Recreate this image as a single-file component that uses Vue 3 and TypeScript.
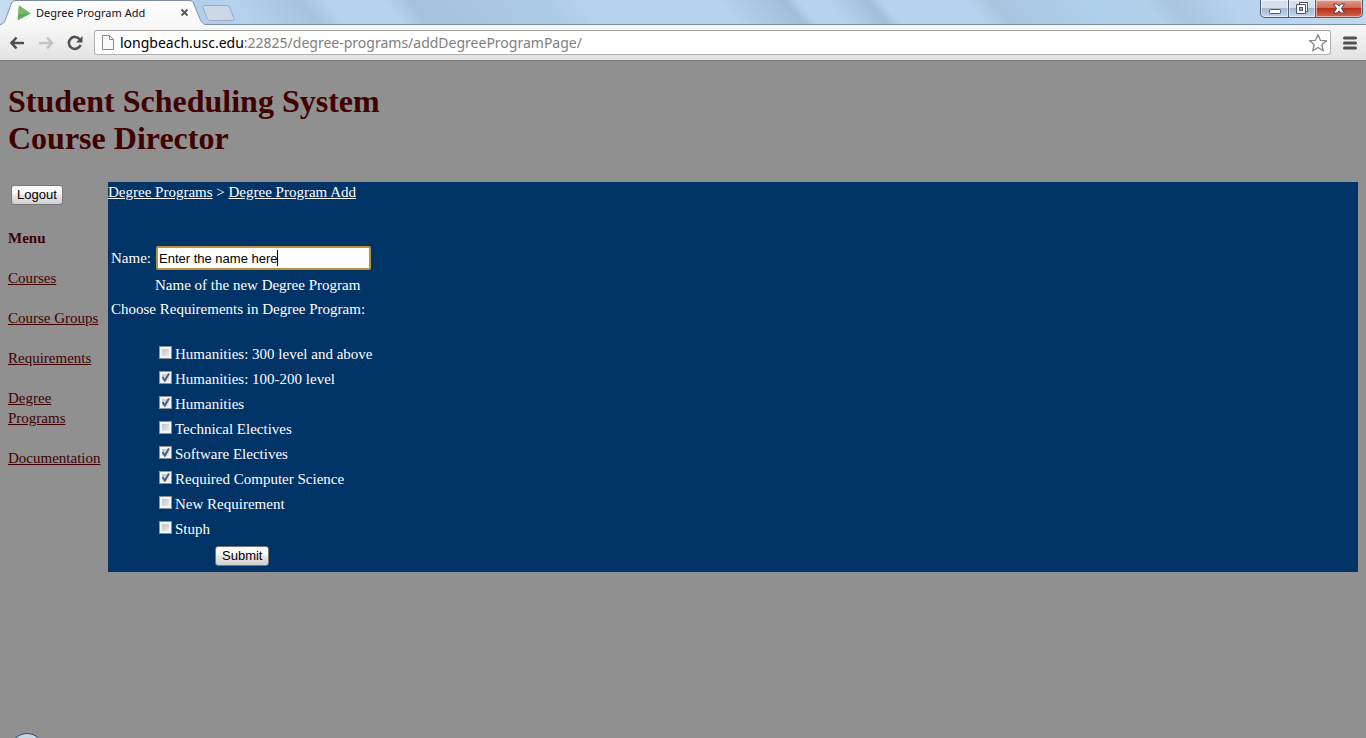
<script setup lang="ts">
import { ref } from 'vue'

interface Requirement {
  id: string
  label: string
  checked: boolean
}

const name = ref('Enter the name here')
const menu = ['Courses', 'Course Groups', 'Requirements', 'Degree Programs', 'Documentation']
const requirements = ref<Requirement[]>([
  { id: 'r1', label: 'Humanities: 300 level and above', checked: false },
  { id: 'r2', label: 'Humanities: 100-200 level', checked: true },
  { id: 'r3', label: 'Humanities', checked: true },
  { id: 'r4', label: 'Technical Electives', checked: false },
  { id: 'r5', label: 'Software Electives', checked: true },
  { id: 'r6', label: 'Required Computer Science', checked: true },
  { id: 'r7', label: 'New Requirement', checked: false },
  { id: 'r8', label: 'Stuph', checked: false },
])
</script>

<template>
  <div class="window">
    <header class="chrome">
      <div class="titlebar">
        <div class="tab">
          <svg class="tab-shape" width="240" height="25" viewBox="0 0 240 25" aria-hidden="true">
            <defs>
              <linearGradient id="tabFill" x1="0" y1="0" x2="0" y2="1">
                <stop offset="0" stop-color="#ffffff" />
                <stop offset="1" stop-color="#f8f8f8" />
              </linearGradient>
            </defs>
            <path d="M0 25V24.500C4 24 4.500 22 6 18L11 4.500C12 2 13 .5 16 .5H189C192 .5 193 2 194 4.500L200 19C202 23 203 24.500 207 24.500V25Z" fill="url(#tabFill)" />
            <path d="M0 24.500C4 24 4.500 22 6 18L11 4.500C12 2 13 .5 16 .5H189C192 .5 193 2 194 4.500L200 19C202 23 203 24.500 207 24.500" fill="none" stroke="#7d8fa6" />
            <path d="M205 5.500H226C228 5.500 229 6 230 8L233.500 17.500C234.500 19.500 234 20.500 232 20.500H211C209 20.500 208 20 207 18L203 8C202.500 6.500 203 5.500 205 5.500Z" fill="#ccd8e5" stroke="#98aabf" />
          </svg>
          <svg class="favicon" width="16" height="16" viewBox="0 0 16 16" aria-hidden="true">
            <path d="M3 .5L14.500 8.500L1.500 15.500Z" fill="#5cab5a" />
            <path d="M3 .5L14.500 8.500L2 9Z" fill="#79b865" />
          </svg>
          <span class="tab-title">Degree Program Add</span>
          <button class="tab-close" type="button" aria-label="Close tab">
            <svg width="9" height="9" viewBox="0 0 9 9"><path d="M1.500 1.500L7.500 7.500M7.500 1.500L1.500 7.500" stroke="#555" stroke-width="1.800" /></svg>
          </button>
        </div>
        <div class="window-buttons">
          <button type="button" class="min" aria-label="Minimize">
            <svg width="14" height="14" viewBox="0 0 14 14"><rect x="1.500" y="8.500" width="11" height="4" rx="1" fill="#fff" stroke="#4b566b" /></svg>
          </button>
          <button type="button" class="max" aria-label="Restore">
            <svg width="14" height="14" viewBox="0 0 14 14"><path d="M4.500 1.500H12.500V10.500H4.500Z" fill="#fff" stroke="#4b566b" /><path d="M1.500 3.500H10.500V12.500H1.500Z" fill="#fff" stroke="#4b566b" /><rect x="4.500" y="6.500" width="3" height="3" fill="#a9b9cd" stroke="#4b566b" /></svg>
          </button>
          <button type="button" class="close" aria-label="Close">
            <svg width="14" height="14" viewBox="0 0 14 14"><path d="M1.500 3H5L7 5.200L9 3H12.500L9.500 7.500L12.500 12H9L7 9.800L5 12H1.500L4.500 7.500Z" fill="#fff" stroke="#4c4450" /></svg>
          </button>
        </div>
      </div>
      <div class="toolbar">
        <button type="button" class="tool" aria-label="Back">
          <svg width="18" height="16" viewBox="0 0 18 16"><path d="M8.500 2.500L3.500 8L8.500 13.500M4 8H16" fill="none" stroke="#505050" stroke-width="2.600" /></svg>
        </button>
        <button type="button" class="tool" aria-label="Forward">
          <svg width="18" height="16" viewBox="0 0 18 16"><path d="M10 2.500L15 8L10 13.500M14.500 8H2" fill="none" stroke="#c4c4c4" stroke-width="2.600" /></svg>
        </button>
        <button type="button" class="tool" aria-label="Reload">
          <svg width="18" height="16" viewBox="0 0 18 16"><path d="M13.800 4.500A6 6 0 1 0 14.500 10" fill="none" stroke="#505050" stroke-width="2.600" /><path d="M16.500 1V7.500H10Z" fill="#505050" /></svg>
        </button>
        <div class="address">
          <svg width="12" height="15" viewBox="0 0 12 15" aria-hidden="true"><path d="M.5 .5H7.500L11.500 4.500V14.500H.5Z" fill="#fafafa" stroke="#888" /><path d="M7.500 .5V4.500H11.500" fill="none" stroke="#888" /></svg>
          <span class="url"><b>longbeach.usc.edu</b>:22825/degree-programs/addDegreeProgramPage/</span>
          <button type="button" class="star" aria-label="Bookmark">
            <svg width="20" height="20" viewBox="0 0 20 20"><path d="M10 1.500L12.400 7.300L18.500 7.700L13.800 11.600L15.300 17.800L10 14.500L4.700 17.800L6.200 11.600L1.500 7.700L7.600 7.300Z" fill="#fff" stroke="#888" stroke-width="1.300" stroke-linejoin="round" /></svg>
          </button>
        </div>
        <button type="button" class="tool menu-button" aria-label="Menu">
          <svg width="14" height="14" viewBox="0 0 14 14"><path d="M1.500 2H12.500M1.500 7H12.500M1.500 12H12.500" stroke="#505050" stroke-width="3" stroke-linecap="round" /></svg>
        </button>
      </div>
    </header>

    <main class="page">
      <h1>Student Scheduling System<br />Course Director</h1>
      <div class="columns">
        <nav class="side">
          <button type="button" class="push">Logout</button>
          <strong>Menu</strong>
          <a v-for="item in menu" :key="item" href="#">{{ item }}</a>
        </nav>
        <section class="panel">
          <div class="crumbs"><a href="#">Degree Programs</a> &gt; <a href="#">Degree Program Add</a></div>
          <form @submit.prevent>
            <div class="name-row">
              <label for="name">Name:</label>
              <div class="field">
                <input id="name" v-model="name" type="text" />
                <i class="caret"></i>
              </div>
            </div>
            <p class="hint">Name of the new Degree Program</p>
            <p class="choose">Choose Requirements in Degree Program:</p>
            <ul>
              <li v-for="r in requirements" :key="r.id">
                <input :id="r.id" v-model="r.checked" type="checkbox" />
                <svg v-if="r.checked" class="tick" width="13" height="13" viewBox="0 0 13 13" aria-hidden="true"><path d="M3.500 6L5.800 9.500L10 2.500" fill="none" stroke="#4a5f97" stroke-width="2" /></svg>
                <label :for="r.id">{{ r.label }}</label>
              </li>
            </ul>
            <button type="submit" class="push submit">Submit</button>
          </form>
        </section>
      </div>
    </main>
    <div class="orb"></div>
  </div>
</template>

<style>
body { margin: 0; background: #909090; }
</style>

<style scoped>
.window { position: relative; min-height: 100vh; overflow: hidden; background: #909090; font: 15px/20px "Liberation Serif", "Times New Roman", serif; color: #400000; }
button { font-family: "Liberation Sans", Arial, sans-serif; }
svg { display: block; }
.titlebar {
  display: flex; justify-content: space-between; height: 24px; border-bottom: 1px solid #7d8fa6;
  background: linear-gradient(50deg, #c9dcf0 0, #b0cfec 15%, #b5d1ed 18%, #a5c2df 23%, #b7d2ee 25%, #b7d2ee 29%, #a5c1de 31%, #abcae5 40%, #b7d2ee 44%, #b7d2ee 53%, #a3bedb 58%, #b7d2ee 59%, #b7d2ee 61%, #a3bedb 64%, #b7d2ee 65%, #b7d2ee 71%, #a8c5e0 73%, #afd0ec 80%, #b0cfe9 84%, #a9c5e0 86%, #b7d2ee 90%, #c4d9ef);
}
.tab { position: relative; display: flex; align-items: center; width: 240px; height: 25px; padding-left: 16px; box-sizing: border-box; }
.tab-shape { position: absolute; left: 0; top: 0; }
.favicon, .tab-title, .tab-close { position: relative; }
.tab-title { width: 144px; margin-left: 4px; font: 11px/24px "Noto Sans", sans-serif; color: #111; }
.tab-close { padding: 0; border: 0; background: none; }
.window-buttons { display: flex; align-items: flex-start; padding-right: 3px; }
.window-buttons button { display: flex; justify-content: center; align-items: center; height: 18px; padding: 0 0 2px; border: 1px solid #4e5c70; border-top: 0; box-sizing: border-box; box-shadow: inset 0 0 0 1px rgba(255,255,255,.5); background: linear-gradient(#d5e0ec 0 45%, #a4b8ce 50%, #c5d6e8); }
.window-buttons .min { width: 29px; border-radius: 0 0 0 5px; }
.window-buttons .max { width: 27px; border-left: 0; }
.window-buttons .close { width: 47px; border-left: 0; border-radius: 0 0 5px 0; background: linear-gradient(#e09d8f 0, #d26a55 45%, #b8301c 50%, #d5624a); }
.toolbar { display: flex; align-items: center; height: 35px; padding: 0 9px 0 8px; border-bottom: 1px solid #808080; background: linear-gradient(#f8f8f8, #e2e2e2); }
.tool { width: 18px; margin-right: 11px; padding: 0; border: 0; background: none; }
.tool.menu-button { width: 14px; margin: 0 0 0 12px; }
.address { display: flex; flex: 1; align-items: center; height: 25px; margin-left: -1px; padding: 0 2px 0 7px; border: 1px solid #b0b0b0; border-top-color: #a0a0a0; border-radius: 3px; box-sizing: border-box; background: #fff; }
.url { flex: 1; margin-left: 6px; font: 14px/22px "Noto Sans", sans-serif; color: #808080; white-space: nowrap; }
.url b { font-weight: 400; color: #000; }
.star { padding: 0; border: 0; background: none; }
.page { padding: 22px 8px 0; }
h1 { margin: 0 0 25px; font-size: 32px; line-height: 37px; }
.columns { display: grid; grid-template-columns: 100px 1fr; }
.side { display: flex; flex-direction: column; align-items: flex-start; gap: 20px; padding-top: 3px; }
.side a { color: #400000; }
.side .push { margin: 0 3px 3px; padding: 0 5px; }
.push { height: 20px; padding: 0 6px; border: 1px solid #777; border-radius: 3px; font-size: 13px; line-height: 16px; color: #000; background: linear-gradient(#fafafa 0 40%, #e8e8e8 50%, #cfcfcf); }
.panel { min-height: 390px; box-sizing: border-box; padding-bottom: 6px; background: #003366; color: #fff; }
.panel a { color: #fff; }
form { padding: 42px 0 0 3px; }
.name-row { display: flex; align-items: center; gap: 5px; height: 28px; }
.name-row label { width: 40px; }
.field { position: relative; }
.field input { display: block; width: 215px; height: 24px; padding: 1px; box-sizing: border-box; border: 2px solid #b8903f; border-radius: 2px; outline: 0; font: 13px/18px "Liberation Sans", Arial, sans-serif; color: #000; background: #fff; }
.caret { position: absolute; left: 121px; top: 4px; width: 1px; height: 16px; background: #000; }
p { margin: 0; }
.hint { margin: 3px 0 4px 44px; }
ul { margin: 22px 0 0; padding: 0 0 0 48px; list-style: none; }
li { position: relative; display: flex; align-items: center; gap: 3px; height: 25px; }
li input { appearance: none; width: 13px; height: 13px; margin: 0 0 3px; border: 1px solid #8e8f8f; box-shadow: inset 0 0 0 2px #f4f4f4; background: linear-gradient(135deg, #b8bcc4, #f3f3f3); }
.tick { position: absolute; left: 0; top: 5px; }
.submit { display: block; margin: 5px 0 0 104px; }
.orb { position: absolute; left: 10px; top: calc(100vh - 5px); width: 32px; height: 32px; border: 1px solid #234f78; border-radius: 50%; background: #c5d4e2; }
</style>
